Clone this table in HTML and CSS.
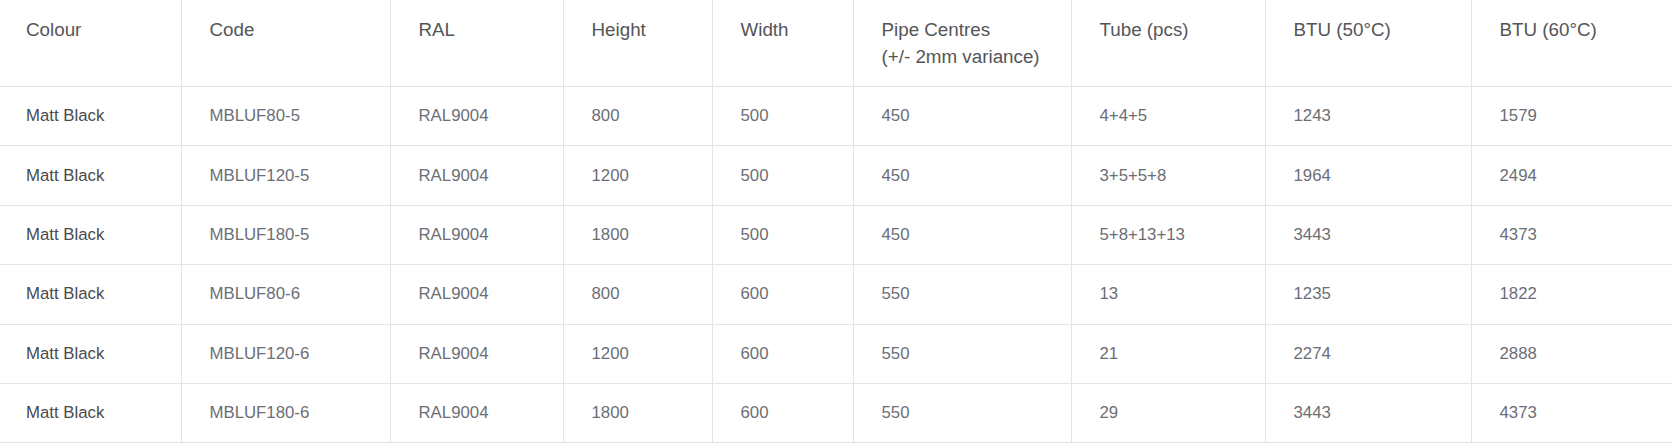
FILE: index.html
```html
<!DOCTYPE html>
<html lang="en">
<head>
<meta charset="utf-8">
<title>Specifications</title>
<link rel="stylesheet" href="styles.css">
</head>
<body>
<table class="spec">
  <colgroup>
    <col class="c1"><col class="c2"><col class="c3"><col class="c4"><col class="c5"><col class="c6"><col class="c7"><col class="c8"><col class="c9">
  </colgroup>
  <thead>
    <tr>
      <th>Colour</th>
      <th>Code</th>
      <th>RAL</th>
      <th>Height</th>
      <th>Width</th>
      <th>Pipe Centres<br>(+/- 2mm variance)</th>
      <th>Tube (pcs)</th>
      <th>BTU (50°C)</th>
      <th>BTU (60°C)</th>
    </tr>
  </thead>
  <tbody>
    <tr><td class="name">Matt Black</td><td>MBLUF80-5</td><td>RAL9004</td><td>800</td><td>500</td><td>450</td><td>4+4+5</td><td>1243</td><td>1579</td></tr>
    <tr><td class="name">Matt Black</td><td>MBLUF120-5</td><td>RAL9004</td><td>1200</td><td>500</td><td>450</td><td>3+5+5+8</td><td>1964</td><td>2494</td></tr>
    <tr><td class="name">Matt Black</td><td>MBLUF180-5</td><td>RAL9004</td><td>1800</td><td>500</td><td>450</td><td>5+8+13+13</td><td>3443</td><td>4373</td></tr>
    <tr><td class="name">Matt Black</td><td>MBLUF80-6</td><td>RAL9004</td><td>800</td><td>600</td><td>550</td><td>13</td><td>1235</td><td>1822</td></tr>
    <tr><td class="name">Matt Black</td><td>MBLUF120-6</td><td>RAL9004</td><td>1200</td><td>600</td><td>550</td><td>21</td><td>2274</td><td>2888</td></tr>
    <tr><td class="name">Matt Black</td><td>MBLUF180-6</td><td>RAL9004</td><td>1800</td><td>600</td><td>550</td><td>29</td><td>3443</td><td>4373</td></tr>
  </tbody>
</table>
</body>
</html>
```
FILE: styles.css
```css
html, body {
  margin: 0;
  padding: 0;
  background: #ffffff;
}

.spec {
  width: 1672px;
  border-collapse: collapse;
  table-layout: fixed;
  font-family: "Liberation Sans", Arial, sans-serif;
}

.c1 { width: 181px; }
.c2 { width: 209px; }
.c3 { width: 173px; }
.c4 { width: 149px; }
.c5 { width: 141px; }
.c6 { width: 218px; }
.c7 { width: 194px; }
.c8 { width: 206px; }
.c9 { width: 201px; }

.spec th,
.spec td {
  text-align: left;
  border-bottom: 1px solid #e4e4e4;
  border-left: 1px solid #e4e4e4;
  padding-left: 28px;
  padding-right: 8px;
}

.spec th:first-child,
.spec td:first-child {
  border-left: none;
  padding-left: 26px;
}

.spec th {
  font-weight: normal;
  font-size: 18.8px;
  line-height: 27px;
  color: #555558;
  vertical-align: top;
  padding-top: 16px;
  padding-bottom: 16px;
}

.spec td {
  font-size: 16.8px;
  line-height: 24px;
  color: #6c6e76;
  vertical-align: middle;
  padding-top: 17.2px;
  padding-bottom: 17.2px;
}

.spec td.name {
  color: #4a4a4d;
}
```
